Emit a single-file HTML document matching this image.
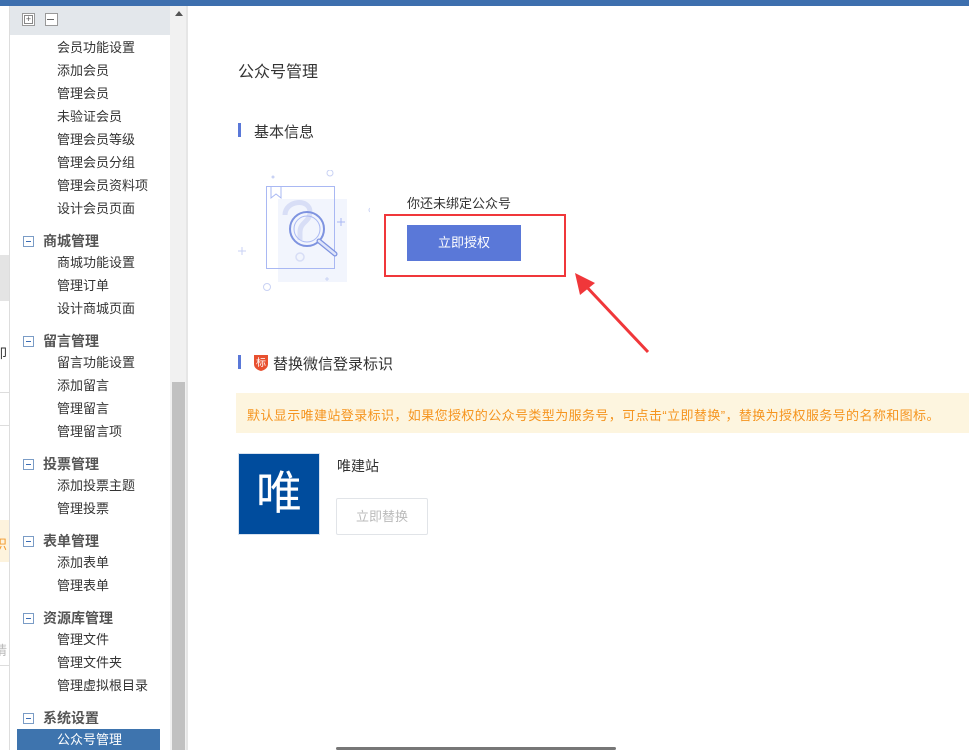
<!DOCTYPE html>
<html><head><meta charset="utf-8"><style>
*{margin:0;padding:0;box-sizing:border-box}
body{width:969px;height:750px;overflow:hidden;background:#fff;font-family:"Liberation Sans","Noto Sans CJK SC",sans-serif;position:relative;color:#333}
.a{position:absolute;white-space:nowrap}
.sub{position:absolute;left:57px;font-size:13px;color:#333;line-height:16px}
.grp{position:absolute;left:43px;font-size:14px;font-weight:bold;color:#555;line-height:16px}
.mi{position:absolute;left:23px;width:11px;height:11px;border:1px solid #7a9cc6;background:#fff}
.mi:after{content:"";position:absolute;left:2px;top:4px;width:5px;height:1px;background:#3b6db5}
</style></head><body>
<div class="a" style="left:0;top:0;width:969px;height:6px;background:#3d6fae"></div>
<div class="a" style="left:0;top:6px;width:9px;height:744px;background:#fff"></div>
<div class="a" style="left:0;top:255px;width:9px;height:46px;background:#e4e4e4"></div>
<div class="a" style="left:0;top:343px;font-size:13px;left:-6px">印</div>
<div class="a" style="left:0;top:392px;width:9px;height:1px;background:#ddd"></div>
<div class="a" style="left:0;top:425px;width:9px;height:1px;background:#ddd"></div>
<div class="a" style="left:0;top:520px;width:9px;height:42px;background:#fdf3dd"></div>
<div class="a" style="left:-6px;top:534px;font-size:13px;color:#f39a2b">识</div>
<div class="a" style="left:-6px;top:640px;font-size:13px;color:#bbb">请</div>
<div class="a" style="left:0;top:665px;width:9px;height:1px;background:#ddd"></div>
<div class="a" style="left:9px;top:6px;width:161px;height:744px;background:#fff;border-left:1px solid #ddd"></div>
<div class="a" style="left:10px;top:6px;width:160px;height:29px;background:#e3e7eb"></div>
<div class="a" style="left:22px;top:13px;width:13px;height:13px;border:1px solid #999;background:#fff"></div>
<div class="a" style="left:24px;top:15px;width:9px;height:9px;border:1px solid #888;font-size:9px;line-height:7px;text-align:center;color:#555">+</div>
<div class="a" style="left:45px;top:13px;width:13px;height:13px;border:1px solid #999;background:#fff"></div>
<div class="a" style="left:47px;top:19px;width:7px;height:1px;background:#666"></div>
<div class="sub" style="top:40px">会员功能设置</div>
<div class="sub" style="top:63px">添加会员</div>
<div class="sub" style="top:86px">管理会员</div>
<div class="sub" style="top:109px">未验证会员</div>
<div class="sub" style="top:132px">管理会员等级</div>
<div class="sub" style="top:155px">管理会员分组</div>
<div class="sub" style="top:178px">管理会员资料项</div>
<div class="sub" style="top:201px">设计会员页面</div>
<div class="mi" style="top:236px"></div><div class="grp" style="top:233px">商城管理</div>
<div class="sub" style="top:255px">商城功能设置</div>
<div class="sub" style="top:278px">管理订单</div>
<div class="sub" style="top:301px">设计商城页面</div>
<div class="mi" style="top:336px"></div><div class="grp" style="top:333px">留言管理</div>
<div class="sub" style="top:355px">留言功能设置</div>
<div class="sub" style="top:378px">添加留言</div>
<div class="sub" style="top:401px">管理留言</div>
<div class="sub" style="top:424px">管理留言项</div>
<div class="mi" style="top:459px"></div><div class="grp" style="top:456px">投票管理</div>
<div class="sub" style="top:478px">添加投票主题</div>
<div class="sub" style="top:501px">管理投票</div>
<div class="mi" style="top:536px"></div><div class="grp" style="top:533px">表单管理</div>
<div class="sub" style="top:555px">添加表单</div>
<div class="sub" style="top:578px">管理表单</div>
<div class="mi" style="top:613px"></div><div class="grp" style="top:610px">资源库管理</div>
<div class="sub" style="top:632px">管理文件</div>
<div class="sub" style="top:655px">管理文件夹</div>
<div class="sub" style="top:678px">管理虚拟根目录</div>
<div class="mi" style="top:713px"></div><div class="grp" style="top:710px">系统设置</div>
<div class="a" style="left:17px;top:729px;width:143px;height:21px;background:#3e74ae"></div>
<div class="sub" style="top:732px;color:#fff">公众号管理</div>
<div class="a" style="left:170px;top:6px;width:16px;height:744px;background:#f1f1f1"></div>
<div class="a" style="left:175px;top:11px;width:0;height:0;border-left:4px solid transparent;border-right:4px solid transparent;border-bottom:5px solid #555"></div>
<div class="a" style="left:172px;top:382px;width:13px;height:368px;background:#c1c1c1"></div>
<div class="a" style="left:186px;top:6px;width:2px;height:744px;background:#e6e6e6"></div>
<div class="a" style="left:238px;top:58px;font-size:16px;color:#333">公众号管理</div>
<div class="a" style="left:238px;top:123px;width:3px;height:14px;background:#5a78d8"></div>
<div class="a" style="left:254px;top:121px;font-size:15px;color:#333">基本信息</div>
<svg class="a" style="left:230px;top:170px" width="140" height="125" viewBox="0 0 140 125">
<rect x="48" y="29" width="69" height="83" fill="#f2f5fd"/>
<rect x="36.5" y="16.5" width="68" height="82" fill="none" stroke="#a9b8f3" stroke-width="1"/>
<path d="M41 17 V28 L46 24 L51 28 V17" fill="none" stroke="#a9b8f3"/>
<path d="M55 45 C55 30 80 28 80 42 C80 52 70 52 70 62 V70" fill="none" stroke="#d8def6" stroke-width="5"/>
<circle cx="70" cy="87" r="4" fill="none" stroke="#d8def6" stroke-width="1.5"/>
<circle cx="77" cy="59" r="17" fill="none" stroke="#7e93e0" stroke-width="2"/>
<circle cx="77" cy="59" r="13" fill="none" stroke="#a9b8f3" stroke-width="1"/>
<path d="M89 71 L105 84" stroke="#7e93e0" stroke-width="5" stroke-linecap="round"/>
<path d="M89 71 L105 84" stroke="#dfe5fa" stroke-width="2.5" stroke-linecap="round"/>
<circle cx="43" cy="7" r="1.5" fill="#c9d2f4"/>
<circle cx="100" cy="3" r="3" fill="none" stroke="#c9d2f4"/>
<circle cx="141" cy="40" r="2" fill="none" stroke="#c9d2f4"/>
<circle cx="37" cy="117" r="3.5" fill="none" stroke="#c9d2f4"/>
<path d="M107 52 h8 M111 48 v8" stroke="#a9b8f3"/>
<path d="M8 81 h8 M12 77 v8" stroke="#c9d2f4"/>
<path d="M95 109 h4 M97 107 v4" stroke="#c9d2f4"/>
</svg>
<div class="a" style="left:407px;top:193px;font-size:13px;color:#333">你还未绑定公众号</div>
<div class="a" style="left:384px;top:214px;width:182px;height:63px;border:2px solid #f0373a"></div>
<div class="a" style="left:407px;top:225px;width:114px;height:36px;background:#5a78d8;color:#fff;font-size:13px;line-height:36px;text-align:center">立即授权</div>
<svg class="a" style="left:565px;top:265px" width="90" height="95">
<path d="M83 87 L18 18" stroke="#f0373a" stroke-width="3"/>
<path d="M10 8 L30 18 L15 30 Z" fill="#f0373a"/>
</svg>
<div class="a" style="left:238px;top:355px;width:3px;height:14px;background:#5a78d8"></div>
<svg class="a" style="left:253px;top:354px" width="16" height="17"><path d="M1 1 H15 V10 Q15 15 8 17 Q1 15 1 10 Z" fill="#e8502f"/><text x="8" y="12" font-size="10" fill="#fff" text-anchor="middle" font-family="Noto Sans CJK SC">标</text></svg>
<div class="a" style="left:273px;top:353px;font-size:15px;color:#333">替换微信登录标识</div>
<div class="a" style="left:236px;top:393px;width:733px;height:40px;background:#fdf5df"></div>
<div class="a" style="left:247px;top:405px;font-size:13px;color:#f5941e;letter-spacing:0.4px">默认显示唯建站登录标识，如果您授权的公众号类型为服务号，可点击“立即替换”，替换为授权服务号的名称和图标。</div>
<div class="a" style="left:238px;top:453px;width:82px;height:82px;background:#004c9d;border:1px solid #d8e2ef;color:#fff;font-size:46px;line-height:78px;text-align:center">唯</div>
<div class="a" style="left:337px;top:456px;font-size:14px;color:#333">唯建站</div>
<div class="a" style="left:336px;top:498px;width:92px;height:37px;border:1px solid #e1e4e8;border-radius:2px;color:#bbb;font-size:13px;line-height:35px;text-align:center">立即替换</div>
<div class="a" style="left:336px;top:747px;width:280px;height:3px;background:#777;border-radius:2px"></div>
</body></html>
